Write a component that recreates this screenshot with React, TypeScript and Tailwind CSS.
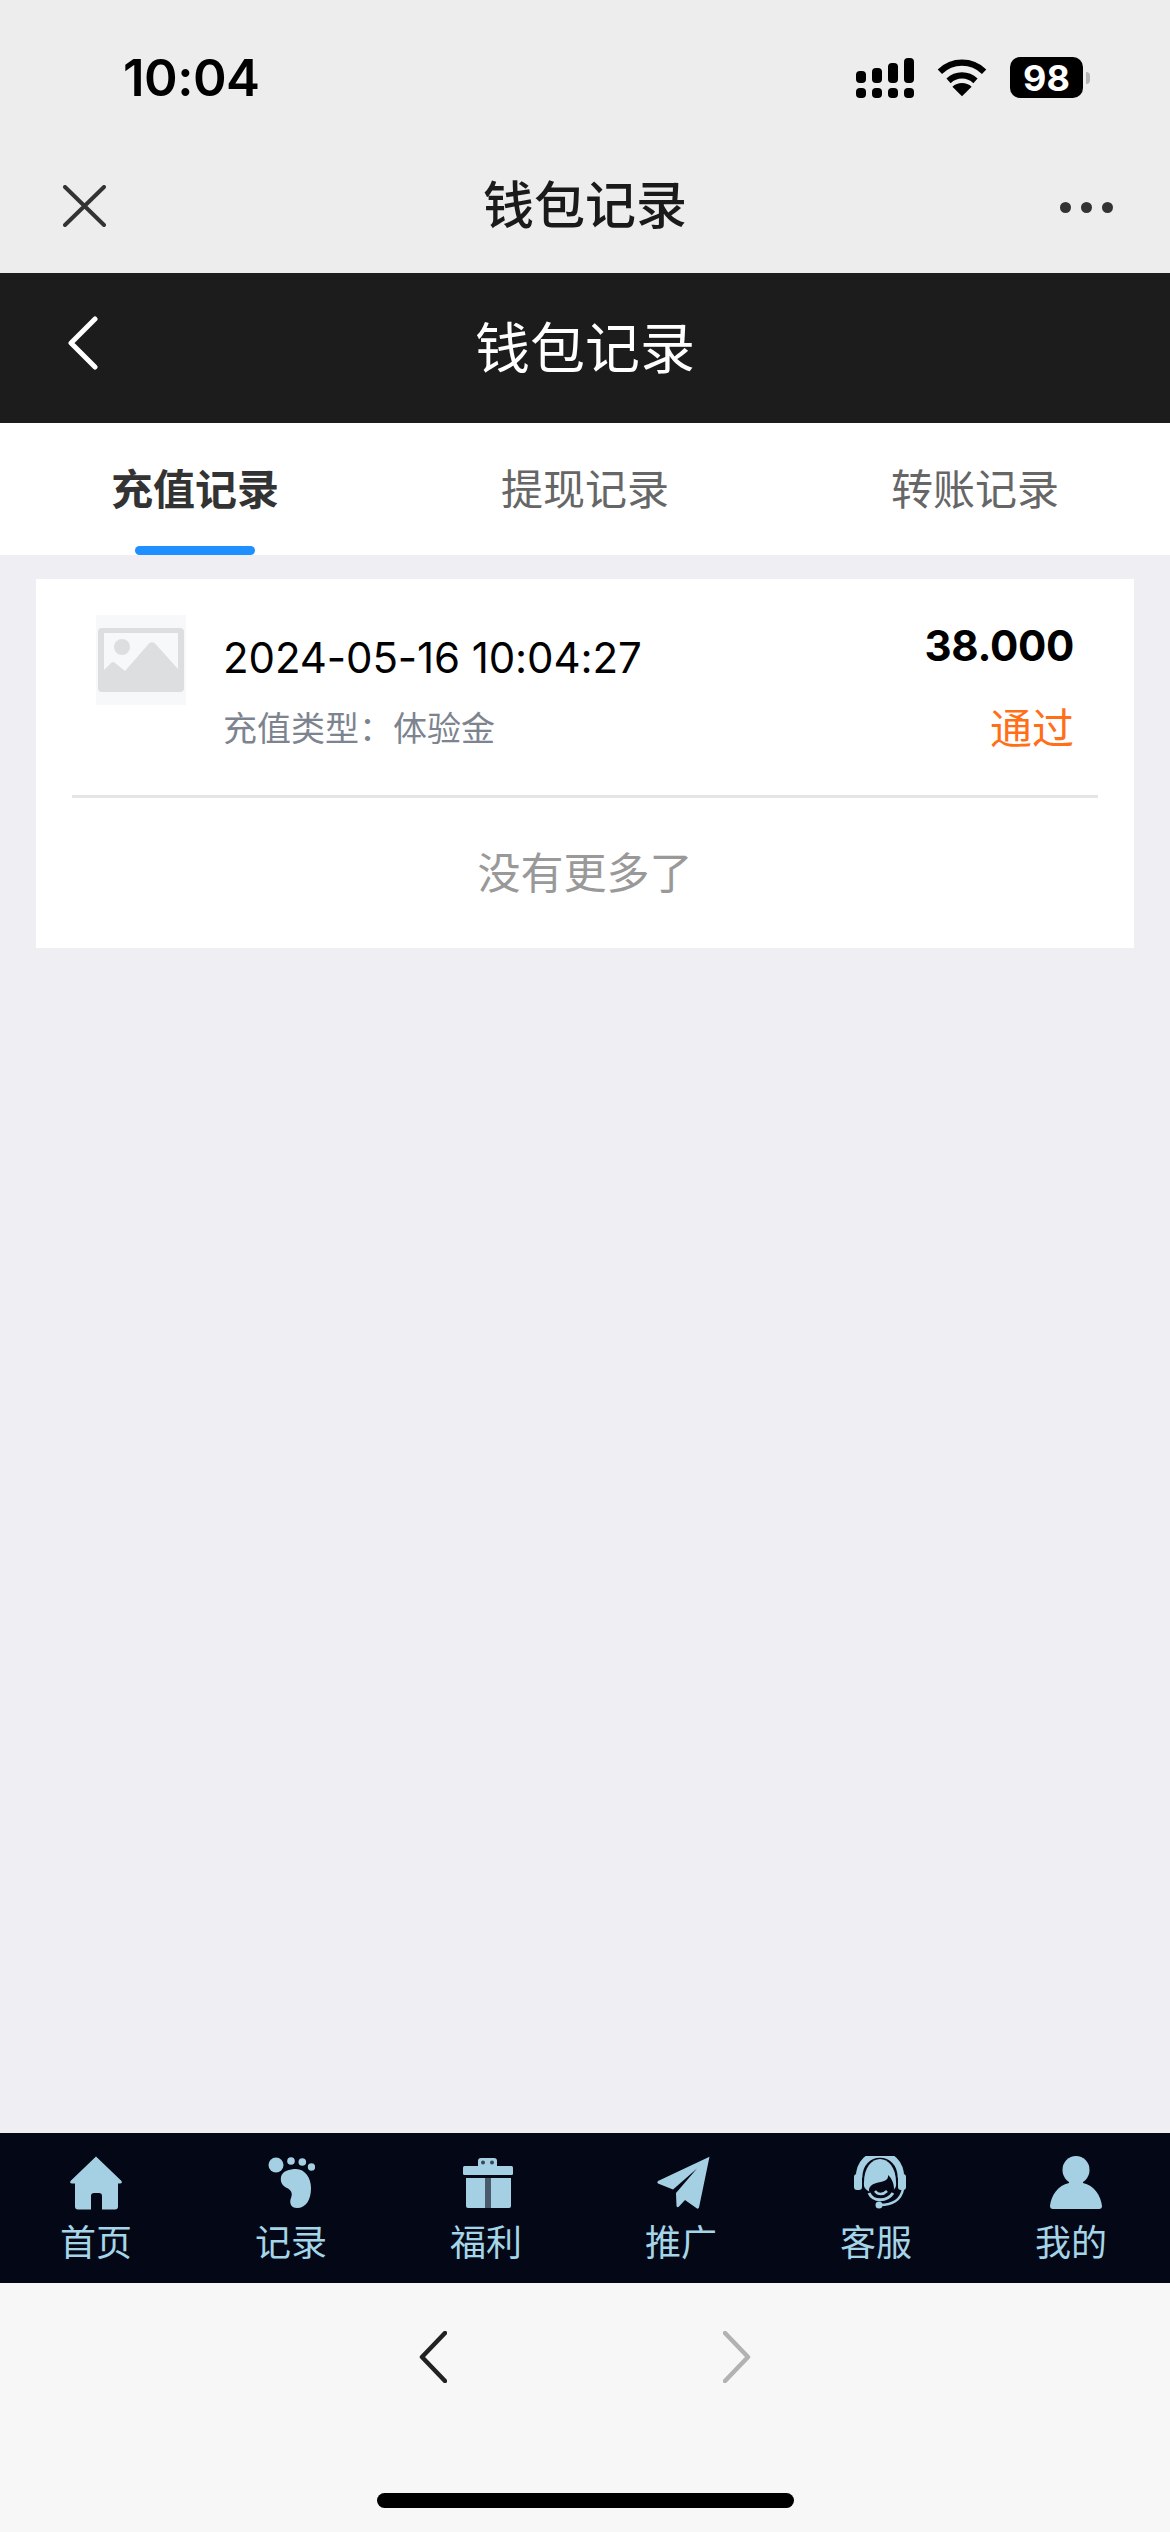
import type { ReactNode } from "react";

const CJK = "font-['Inter','Noto_Sans_CJK_SC',sans-serif]";

function StatusIcons() {
  return (
    <div className="flex items-center">
      <svg width="58" height="40" viewBox="0 0 58 40" fill="#000">
        <rect x="0" y="13" width="10" height="12" rx="4" />
        <rect x="16" y="10" width="10" height="15" rx="4" />
        <rect x="32" y="5" width="10" height="20" rx="4" />
        <rect x="48" y="0" width="10" height="25" rx="4" />
        <rect x="0" y="30" width="10" height="10" rx="4" />
        <rect x="16" y="30" width="10" height="10" rx="4" />
        <rect x="32" y="30" width="10" height="10" rx="4" />
        <rect x="48" y="30" width="10" height="10" rx="4" />
      </svg>
      <svg className="ml-[23px]" width="50" height="38" viewBox="0 0 52 38" fill="none" stroke="#000" strokeWidth="6.5">
        <path d="M3 12.500C16 0 36 0 49 12.500" />
        <path d="M12 22c8-7.500 20-7.500 28 0" />
        <path fill="#000" stroke="none" d="M26 38 L16 28c5.500-5 14.500-5 20 0Z" />
      </svg>
      <div className="ml-[23px] flex items-center">
        <div className="flex h-[41px] w-[73px] items-center justify-center rounded-[10px] bg-black font-['Inter',sans-serif] text-[36px] font-bold leading-none text-white">
          98
        </div>
        <div className="ml-[3px] h-[12px] w-[4px] rounded-r-full bg-[#b5b5b5]" />
      </div>
    </div>
  );
}

function HomeIcon() {
  return (
    <svg width="54" height="54" viewBox="0 0 54 54" fill="#a5d0e3">
      <path d="M27 0.500 L52.500 25 Q53.500 27.500 51 27.500 L49 27.500 L49 50.500 Q49 53.500 46 53.500 L33 53.500 L33 40 Q33 37 30 37 L25 37 Q22 37 22 40 L22 53.500 L9 53.500 Q6 53.500 6 50.500 L6 27.500 L3 27.500 Q0.500 27.500 1.500 25 Z" />
    </svg>
  );
}

function FootIcon() {
  return (
    <svg width="48" height="54" viewBox="-2 0 48 54" fill="#a5d0e3">
      <circle cx="7" cy="9" r="7.500" />
      <circle cx="22" cy="5" r="3.800" />
      <circle cx="33.300" cy="6" r="3.800" />
      <circle cx="42.500" cy="11" r="3.700" />
      <path d="M12 21 C13 15 21 13 27 13 C36 13 42 22 42 32 C42 44 37 52 28 52 C22 52 20 47 22 42 C24 37 22 34 18 32 C14 30 11 27 12 21 Z" />
    </svg>
  );
}

function GiftIcon() {
  return (
    <svg className="blur-[0.6px]" width="54" height="54" viewBox="0 0 54 54" fill="#a5d0e3">
      <path d="M19 10 V5 Q19 2 22 2 H35 Q38 2 38 5 V10 Z" />
      <circle cx="24" cy="6.500" r="2" fill="#3a4656" />
      <circle cx="33" cy="6.500" r="2" fill="#3a4656" />
      <rect x="4" y="10" width="50" height="9" rx="1.500" />
      <path d="M7 22 H26 V52 H9 Q7 52 7 50 Z" />
      <rect x="26" y="22" width="6" height="30" fill="#4a5a6b" />
      <path d="M32 22 H52 V50 Q52 52 50 52 H32 Z" />
    </svg>
  );
}

function PlaneIcon() {
  return (
    <svg width="60" height="54" viewBox="0 0 60 54" fill="#a5d0e3">
      <path d="M58.500 0.700 L7 25 Q5.500 26.500 7 27.500 L22 33.500 L46 12.500 L25 37 L25.500 50 Q26 52 28 50.500 L34 44 L46 52.500 Q47.500 53 48 51.500 Z" />
    </svg>
  );
}

function HeadsetIcon() {
  return (
    <svg width="62" height="54" viewBox="-9 0 62 54">
      <path d="M5 22 C5 -9.300 47 -9.300 47 22" fill="none" stroke="#a5d0e3" strokeWidth="6.500" />
      <rect x="0" y="18" width="8" height="16" rx="3" fill="#a5d0e3" />
      <rect x="44" y="18" width="8" height="16" rx="3" fill="#a5d0e3" />
      <path d="M10 30 C8 -6 44 -6 42 30 C40 40 12 40 10 30 Z" fill="#a5d0e3" />
      <path d="M15 33 C17 27 24 27 30 25 C33 24 34.500 22 34 19 C37.500 22 40 27 40 33 C40 38 33 41 26 41 C20 41 14 38 15 33 Z" fill="#040816" />
      <path d="M15 37 C19 46 33 46 39 37" fill="none" stroke="#a5d0e3" strokeWidth="3" />
      <path d="M21 35 C24 39 29 39 33 35" fill="none" stroke="#a5d0e3" strokeWidth="2.500" />
      <path d="M49 33 C47 44 38 49 26 49" fill="none" stroke="#a5d0e3" strokeWidth="2.500" />
      <circle cx="25" cy="49" r="3.500" fill="#a5d0e3" />
    </svg>
  );
}

function UserIcon() {
  return (
    <svg width="64" height="54" viewBox="-10 0 64 54" fill="#a5d0e3">
      <ellipse cx="27" cy="14" rx="13.500" ry="14" />
      <path d="M20 24 H34 V27 C45 29 52 40 53 50 Q53 53 50 53 H4 Q1 53 1 50 C2 40 9 29 20 27 Z" />
    </svg>
  );
}

const navItems: { label: string; icon: ReactNode }[] = [
  { label: "首页", icon: <HomeIcon /> },
  { label: "记录", icon: <FootIcon /> },
  { label: "福利", icon: <GiftIcon /> },
  { label: "推广", icon: <PlaneIcon /> },
  { label: "客服", icon: <HeadsetIcon /> },
  { label: "我的", icon: <UserIcon /> },
];

const tabs = ["充值记录", "提现记录", "转账记录"];

export default function App() {
  return (
    <div className={`flex h-[2532px] w-[1170px] flex-col overflow-hidden bg-[#eeeef3] ${CJK}`}>
      {/* browser chrome */}
      <header className="h-[273px] shrink-0 bg-[#ededed]">
        <div className="flex h-[155px] items-center justify-between pl-[123px] pr-[80px]">
          <span className="font-['Inter',sans-serif] text-[51px] font-semibold leading-none tracking-[-0.5px] text-black">10:04</span>
          <StatusIcons />
        </div>
        <div className="grid h-[118px] grid-cols-[1fr_auto_1fr] items-start px-[57px]">
          <svg className="ml-[6px] mt-[30px]" width="43" height="42" viewBox="0 0 43 42" stroke="#333" strokeWidth="4" strokeLinecap="round">
            <path d="M2 2 L41 40 M41 2 L2 40" />
          </svg>
          <span className="mt-[21px] text-[51px] font-medium leading-[60px] text-[#1a1a1a]">钱包记录</span>
          <div className="mt-[47px] flex justify-end gap-[10px]">
            <span className="size-[11px] rounded-full bg-[#333]" />
            <span className="size-[11px] rounded-full bg-[#333]" />
            <span className="size-[11px] rounded-full bg-[#333]" />
          </div>
        </div>
      </header>

      {/* page title */}
      <div className="relative flex h-[150px] shrink-0 items-center justify-center bg-[#1c1c1c]">
        <svg className="absolute left-[68px] top-[43px]" width="30" height="54" viewBox="0 0 30 54" fill="none" stroke="#fff" strokeWidth="5" strokeLinecap="round" strokeLinejoin="round">
          <path d="M27 3 L3 27 L27 51" />
        </svg>
        <span className="text-[55px] leading-none text-white">钱包记录</span>
      </div>

      {/* tabs */}
      <div className="grid h-[132px] shrink-0 grid-cols-3 bg-white">
        {tabs.map((tab, i) => (
          <div key={tab} className="relative flex items-center justify-center">
            <span className={i === 0 ? "text-[42px] font-bold text-[#333]" : "text-[42px] text-[#666]"}>{tab}</span>
            {i === 0 ? <div className="absolute bottom-0 h-[9px] w-[120px] rounded-full bg-[#1e90ff]" /> : null}
          </div>
        ))}
      </div>

      {/* records */}
      <main className="min-h-0 flex-1 px-[36px] pt-[24px]">
        <div className="h-[369px] bg-white px-[36px]">
          <div className="flex h-[219px] items-start border-b-[3px] border-[#e5e5e8] pl-[24px] pr-[24px] pt-[36px]">
            <div className="flex size-[90px] shrink-0 items-center justify-center bg-[#f7f8fa]">
              <svg width="86" height="64" viewBox="0 0 86 64">
                <rect width="86" height="64" rx="4" fill="#dcdee0" />
                <rect x="6" y="5" width="74" height="54" fill="#f7f8fa" />
                <path d="M6 42 L13 35 Q15 33 17 35 L27 43 L51 15.500 Q54 13 57 15.500 L80 41 V64 H6 Z" fill="#dcdee0" />
                <circle cx="24" cy="19" r="8" fill="#dcdee0" />
              </svg>
            </div>
            <div className="ml-[37px] mt-[17px] min-w-0 flex-1">
              <p className="whitespace-nowrap text-[42px] leading-[52px] tracking-[-0.1px] text-black">2024-05-16 10:04:27</p>
              <p className="mt-[23px] whitespace-nowrap text-[34px] leading-[44px] text-[#7d8490]">充值类型：体验金</p>
            </div>
            <div className="flex flex-col items-end">
              <p className="mt-[5px] text-[42px] font-bold leading-[52px] tracking-[-0.3px] text-black">38.000</p>
              <p className="mt-[31px] text-[42px] leading-[52px] text-[#ff6f1a]">通过</p>
            </div>
          </div>
          <div className="flex h-[150px] items-center justify-center text-[43px] text-[#999]">没有更多了</div>
        </div>
      </main>

      {/* bottom tab bar */}
      <nav className="grid h-[150px] shrink-0 grid-cols-6 bg-[#040816]">
        {navItems.map((item) => (
          <div key={item.label} className="flex flex-col items-center pr-[3px] pt-[23px]">
            <div className="flex h-[54px] items-center justify-center">{item.icon}</div>
            <span className="mt-[11px] text-[36px] leading-[44px] text-[#a5d5e8]">{item.label}</span>
          </div>
        ))}
      </nav>

      {/* browser back / forward */}
      <footer className="relative h-[249px] shrink-0 bg-[#f7f7f7]">
        <div className="flex h-[200px] justify-center gap-[276px] pt-[48px]">
          <svg width="28" height="52" viewBox="0 0 28 52" fill="none" stroke="#222" strokeWidth="4.500" strokeLinecap="round" strokeLinejoin="round">
            <path d="M26 2 L3 26 L26 50" />
          </svg>
          <svg width="28" height="52" viewBox="0 0 28 52" fill="none" stroke="#b2b2b2" strokeWidth="4.500" strokeLinecap="round" strokeLinejoin="round">
            <path d="M2 2 L25 26 L2 50" />
          </svg>
        </div>
        <div className="absolute left-[377px] top-[210px] h-[15px] w-[417px] rounded-full bg-black" />
      </footer>
    </div>
  );
}
